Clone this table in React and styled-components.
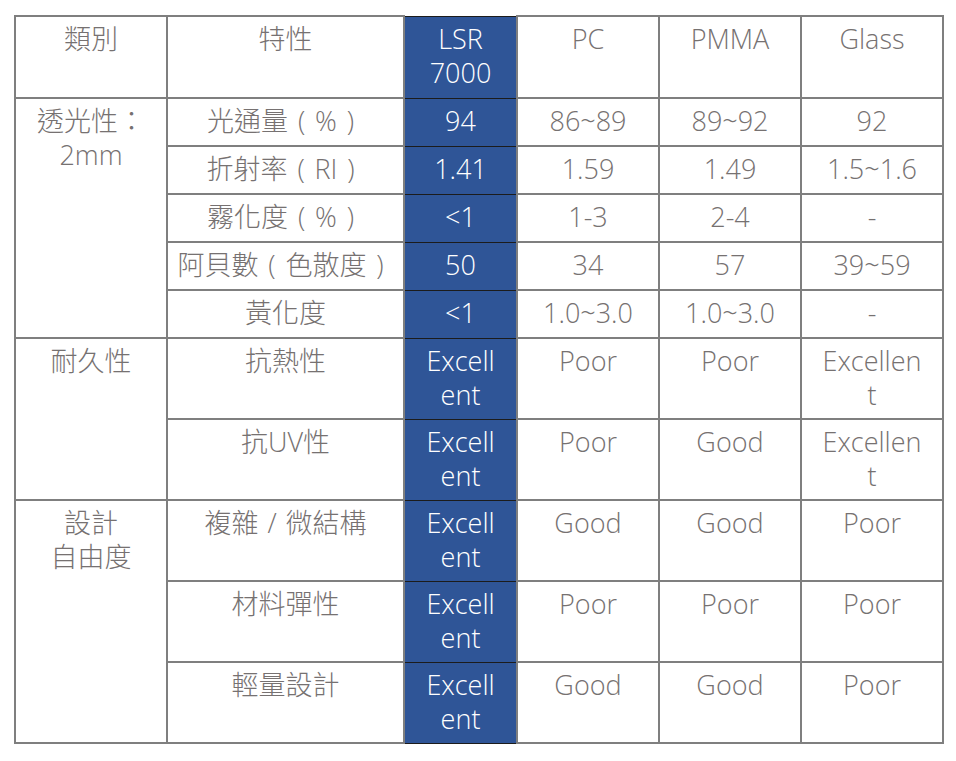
import React from 'react';
import styled, { createGlobalStyle } from 'styled-components';

const GlobalStyle = createGlobalStyle`
  body {
    margin: 0;
    background: #ffffff;
  }
`;

const Page = styled.div`
  width: 956px;
  height: 761px;
  padding: 15px 0 0 14px;
  box-sizing: border-box;
  font-family: "Open Sans", "Noto Sans CJK TC", sans-serif;
`;

const Table = styled.table`
  border-collapse: collapse;
  table-layout: fixed;
  width: 928px;
`;

const Row = styled.tr`
  height: ${(p) => p.$h}px;
`;

const Cell = styled.td`
  border: 2px solid #7f7f7f;
  padding: 5px 0 0;
  vertical-align: top;
  text-align: center;
  font-size: 27px;
  font-weight: 300;
  line-height: 34px;
  color: #767171;
  white-space: nowrap;
  background: #ffffff;
`;

const BlueCell = styled(Cell)`
  background: #2f5597;
  color: #ffffff;
  border-color: #1c1c1c;
  border-width: 1px;
`;

/* full-width punctuation drawn as a centred half-width glyph in a 1em box */
const Wide = styled.span`
  display: inline-block;
  width: 1em;
  text-align: center;
`;

const cols = [152, 237, 113, 142, 142, 142];

const WIDE = { '（': '(', '）': ')', '／': '/' };

const Line = ({ text }) =>
  Array.from(text).map((ch, i) =>
    WIDE[ch] ? <Wide key={i}>{WIDE[ch]}</Wide> : ch
  );

const Multi = ({ text }) =>
  text.split('\n').map((line, i) => (
    <React.Fragment key={i}>
      {i > 0 && <br />}
      <Line text={line} />
    </React.Fragment>
  ));

const groups = [
  {
    name: '透光性：\n2mm',
    h: 48,
    rows: [
      ['光通量（%）', '94', '86~89', '89~92', '92'],
      ['折射率（RI）', '1.41', '1.59', '1.49', '1.5~1.6'],
      ['霧化度（%）', '<1', '1-3', '2-4', '-'],
      ['阿貝數（色散度）', '50', '34', '57', '39~59'],
      ['黃化度', '<1', '1.0~3.0', '1.0~3.0', '-'],
    ],
  },
  {
    name: '耐久性',
    h: 81,
    rows: [
      ['抗熱性', 'Excell\nent', 'Poor', 'Poor', 'Excellen\nt'],
      ['抗UV性', 'Excell\nent', 'Poor', 'Good', 'Excellen\nt'],
    ],
  },
  {
    name: '設計\n自由度',
    h: 81,
    rows: [
      ['複雜／微結構', 'Excell\nent', 'Good', 'Good', 'Poor'],
      ['材料彈性', 'Excell\nent', 'Poor', 'Poor', 'Poor'],
      ['輕量設計', 'Excell\nent', 'Good', 'Good', 'Poor'],
    ],
  },
];

export default function App() {
  return (
    <Page>
      <GlobalStyle />
      <Table>
        <colgroup>
          {cols.map((w, i) => (
            <col key={i} style={{ width: w }} />
          ))}
        </colgroup>
        <tbody>
          <Row $h={82}>
            <Cell>類別</Cell>
            <Cell>特性</Cell>
            <BlueCell>
              <Multi text={'LSR\n7000'} />
            </BlueCell>
            <Cell>PC</Cell>
            <Cell>PMMA</Cell>
            <Cell>Glass</Cell>
          </Row>
          {groups.map((g) =>
            g.rows.map((r, i) => (
              <Row key={g.name + i} $h={g.h}>
                {i === 0 && (
                  <Cell rowSpan={g.rows.length}>
                    <Multi text={g.name} />
                  </Cell>
                )}
                <Cell>
                  <Multi text={r[0]} />
                </Cell>
                <BlueCell>
                  <Multi text={r[1]} />
                </BlueCell>
                <Cell>{r[2]}</Cell>
                <Cell>{r[3]}</Cell>
                <Cell>
                  <Multi text={r[4]} />
                </Cell>
              </Row>
            ))
          )}
        </tbody>
      </Table>
    </Page>
  );
}
